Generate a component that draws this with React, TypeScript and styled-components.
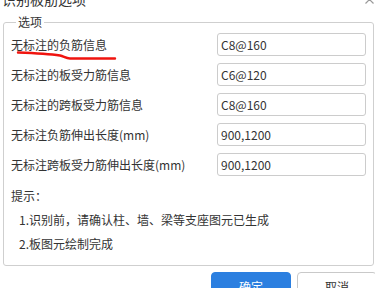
import React from 'react'
import styled, { createGlobalStyle } from 'styled-components'

const GlobalStyle = createGlobalStyle`
    html, body {
        margin : 0;
        padding : 0;
        background : #fff;
        overflow : hidden;
    }
    body {
        font-family : "Noto Sans CJK SC", "Noto Sans", sans-serif;
        color : #333;
    }
`

const Dialog = styled.div`
    position : relative;
    width : 375px;
    height : 288px;
    overflow : hidden;
    display : flex;
    flex-direction : column;
`

const Header = styled.div`
    display : flex;
    align-items : flex-end;
    justify-content : space-between;
    height : 14px;
    padding : 0 1px 0 2px;
    margin-top : -8px;
    margin-bottom : 8px;

    .title {
        font-size : 14px;
        line-height : 14px;
        color : #333;
    }
`

const CloseBtn = styled.svg`
    width : 9px;
    height : 9px;
    margin-bottom : 2px;
    stroke : #9a9a9a;
    stroke-width : 1.2;
`

const Fieldset = styled.fieldset`
    margin : 0 1px 0 3px;
    padding : 0 7px 9px 7px;
    border : 1px solid #cfcfcf;
    border-radius : 3px;
    min-width : 0;

    legend {
        margin-left : 5px;
        padding : 0 2px;
        font-size : 12px;
        line-height : 16px;
        color : #333;
    }
`

const Rows = styled.div`
    display : flex;
    flex-direction : column;
    gap : 7px;
    margin-top : 3px;
`

const Row = styled.div`
    display : grid;
    grid-template-columns : 1fr 149px;
    align-items : center;
    height : 23px;

    label {
        font-size : 12px;
        color : #333;
        white-space : nowrap;
    }
`

const Input = styled.input`
    box-sizing : border-box;
    width : 149px;
    height : 23px;
    border : 1px solid #cccccc;
    border-radius : 3px;
    padding : 0 4px 0 3px;
    font-family : inherit;
    font-size : 12px;
    color : #333;
    outline : none;
`

const Hints = styled.div`
    margin-top : 8px;
    font-size : 12px;
    line-height : 24px;
    color : #333;
`

const HintItem = styled.div`
    padding-left : 8px;
`

const Footer = styled.div`
    display : flex;
    justify-content : flex-end;
    gap : 6px;
    margin-top : 6px;
    margin-right : -2px;
`

const Button = styled.button<{ $primary?: boolean }>`
    box-sizing : border-box;
    width : 80px;
    height : 28px;
    border-radius : 4px;
    font-family : inherit;
    font-size : 12px;
    border : 1px solid ${p => p.$primary ? '#2b7fe0' : '#c9c9c9'};
    background : ${p => p.$primary ? '#2b7fe0' : '#fff'};
    color : ${p => p.$primary ? '#fff' : '#333'};
`

const Scribble = styled.svg`
    position : absolute;
    left : 0;
    top : 0;
    width : 375px;
    height : 288px;
    pointer-events : none;
`

const rows = [
    { label : '无标注的负筋信息', value : 'C8@160' },
    { label : '无标注的板受力筋信息', value : 'C6@120' },
    { label : '无标注的跨板受力筋信息', value : 'C8@160' },
    { label : '无标注负筋伸出长度(mm)', value : '900,1200' },
    { label : '无标注跨板受力筋伸出长度(mm)', value : '900,1200' },
]

const App = () => {
    return (
        <Dialog>
            <GlobalStyle />
            <Header>
                <span className="title">识别板筋选项</span>
                <CloseBtn viewBox="0 0 9 9">
                    <path d="M0.5 0.5 L8.5 8.5 M8.5 0.5 L0.5 8.5" />
                </CloseBtn>
            </Header>
            <Fieldset>
                <legend>选项</legend>
                <Rows>
                    {rows.map(r => (
                        <Row key={r.label}>
                            <label>{r.label}</label>
                            <Input defaultValue={r.value} />
                        </Row>
                    ))}
                </Rows>
                <Hints>
                    <div>提示：</div>
                    <HintItem>1.识别前，请确认柱、墙、梁等支座图元已生成</HintItem>
                    <HintItem>2.板图元绘制完成</HintItem>
                </Hints>
            </Fieldset>
            <Footer>
                <Button $primary>确定</Button>
                <Button>取消</Button>
            </Footer>
            {/* 红色手绘标记 */}
            <Scribble viewBox="0 0 375 288">
                <path d="M18 52.5 C 32 53, 50 54, 60 55.5 C 64 56.5, 66 58.5, 70 58.5 L 115 58.5"
                    fill="none" stroke="#f0140f" strokeWidth="2.4" strokeLinecap="round" />
            </Scribble>
        </Dialog>
    )
}

export default App
